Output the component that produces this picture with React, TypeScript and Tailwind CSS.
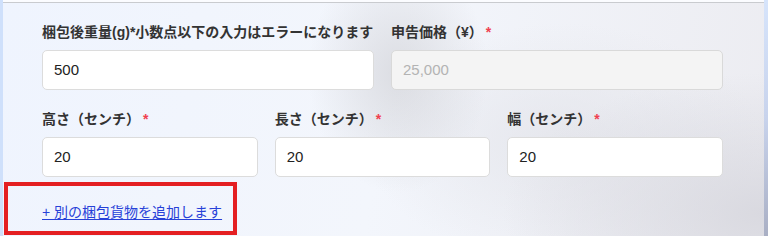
import React from 'react';

const font = { fontFamily: '"Liberation Sans", "Noto Sans CJK JP", sans-serif' };

const Label = ({ text, required }: { text: string; required?: boolean }) => (
  <div className="h-5 mb-2 flex items-center text-[14px] font-bold leading-5 text-[#333]">
    <span>{text}</span>
    {required && <span className="ml-[3px] text-[#f0404f]">*</span>}
  </div>
);

const Field = ({ value, disabled }: { value: string; disabled?: boolean }) => (
  <div
    className={
      disabled
        ? 'h-[40px] rounded-[5px] border border-[#d9d9d9] bg-[#f4f4f4] px-[11px] flex items-center text-[15px] text-[#b3b3b3]'
        : 'h-[40px] rounded-[5px] border border-[#dcdcdc] bg-white px-[11px] flex items-center text-[15px] text-[#222]'
    }
  >
    {value}
  </div>
);

export default function App() {
  return (
    <div
      style={font}
      className="w-[768px] h-[236px] overflow-hidden flex bg-white"
    >
      <div className="w-[3px] bg-[#cfe0fb]" />
      <div className="flex-1 flex flex-col">
        <div className="h-[2px] bg-[#fbfcff]" />
        <div className="h-px bg-[#c9cbcf]" />
        <div className="flex-1 flex flex-col bg-[#f0f5fe] bg-[radial-gradient(ellipse_90px_120px_at_395px_70px,rgba(200,200,205,0.55),transparent),radial-gradient(ellipse_260px_140px_at_760px_210px,rgba(215,215,222,0.9),transparent),radial-gradient(ellipse_200px_120px_at_560px_140px,rgba(225,226,232,0.7),transparent),linear-gradient(100deg,#eff4fe_0%,#f3f6fc_50%,#ececf1_100%)]">
          <div className="pl-[39px] pr-[41px] pt-[19px]">
            <div className="grid grid-cols-2 gap-x-[17px]">
              <div>
                <Label text="梱包後重量(g)*小数点以下の入力はエラーになります" />
                <Field value="500" />
              </div>
              <div>
                <Label text="申告価格（¥）" required />
                <Field value="25,000" disabled />
              </div>
            </div>
            <div className="grid grid-cols-3 gap-x-[17px] mt-[19px]">
              <div>
                <Label text="高さ（センチ）" required />
                <Field value="20" />
              </div>
              <div>
                <Label text="長さ（センチ）" required />
                <Field value="20" />
              </div>
              <div>
                <Label text="幅（センチ）" required />
                <Field value="20" />
              </div>
            </div>
          </div>
          <div className="mt-[5px] ml-[1px] w-[233px] h-[53px] border-4 border-[#e41f22] pl-[34px] pt-[14px]">
            <a className="text-[14px] leading-5 text-[#2741d8] underline underline-offset-2 cursor-pointer whitespace-nowrap">
              + 別の梱包貨物を追加します
            </a>
          </div>
        </div>
      </div>
      <div className="w-[4px] bg-[linear-gradient(180deg,#d6e4fb_0%,#c8d3ec_50%,#a9afc4_100%)]" />
    </div>
  );
}
